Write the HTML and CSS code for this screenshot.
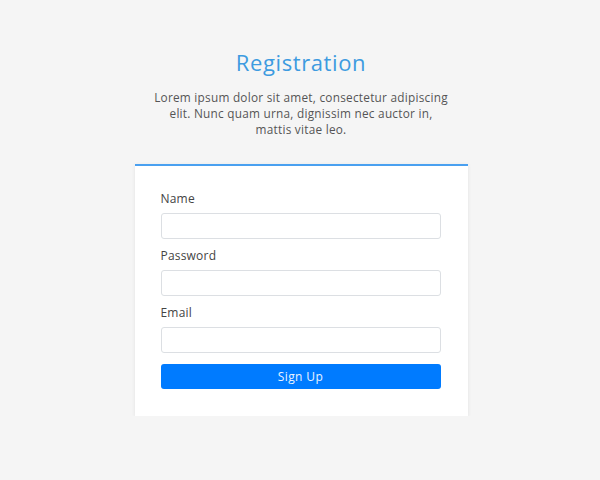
FILE: index.html
```html
<!DOCTYPE html>
<html>
<head>
<meta charset="utf-8">
<link rel="stylesheet" href="styles.css">
</head>
<body>
<main class="page">
  <header class="intro">
    <h1 class="title">Registration</h1>
    <p class="lead">Lorem ipsum dolor sit amet, consectetur adipiscing elit. Nunc quam urna, dignissim nec auctor in, mattis vitae leo.</p>
  </header>
  <form class="card">
    <label class="field">
      <span class="label">Name</span>
      <input class="input" type="text">
    </label>
    <label class="field">
      <span class="label">Password</span>
      <input class="input" type="password">
    </label>
    <label class="field">
      <span class="label">Email</span>
      <input class="input" type="email">
    </label>
    <button class="btn" type="button">Sign Up</button>
  </form>
</main>
</body>
</html>
```
FILE: styles.css
```css
html, body {
  margin: 0;
  padding: 0;
  background: #f5f5f5;
  font-family: "Open Sans", "Noto Sans", sans-serif;
  color: #444;
}
.page {
  display: flex;
  flex-direction: column;
  align-items: center;
  padding: 48px 0 0 2px;
}
.intro {
  display: flex;
  flex-direction: column;
  align-items: center;
  width: 302px;
  text-align: center;
}
.title {
  margin: 0;
  font-size: 22px;
  line-height: 28px;
  font-weight: 400;
  color: #3d9be0;
  letter-spacing: 0.6px;
}
.lead {
  margin: 13px 0 0;
  font-size: 11.8px;
  line-height: 16px;
  color: #555;
  letter-spacing: 0.25px;
}
.card {
  box-sizing: border-box;
  width: 333px;
  margin-top: 27px;
  background: #fff;
  border-top: 2px solid #4aa0f0;
  box-shadow: 0 1px 4px rgba(0,0,0,0.08);
  padding: 25px 27px 27px 26px;
  display: flex;
  flex-direction: column;
}
.field {
  display: flex;
  flex-direction: column;
  margin-bottom: 9px;
}
.label {
  font-size: 12px;
  line-height: 16px;
  color: #444;
  margin-bottom: 6px;
  letter-spacing: 0.2px;
}
.input {
  box-sizing: border-box;
  height: 26px;
  width: 100%;
  border: 1px solid #dcdfe3;
  border-radius: 3px;
  background: #fff;
  margin: 0;
}
.btn {
  box-sizing: border-box;
  height: 25px;
  width: 100%;
  margin-top: 2px;
  border: 0;
  border-radius: 3px;
  background: #007bff;
  color: #eaf3ff;
  font-family: "Open Sans", "Noto Sans", sans-serif;
  font-size: 12px;
  letter-spacing: 0.4px;
}
```
